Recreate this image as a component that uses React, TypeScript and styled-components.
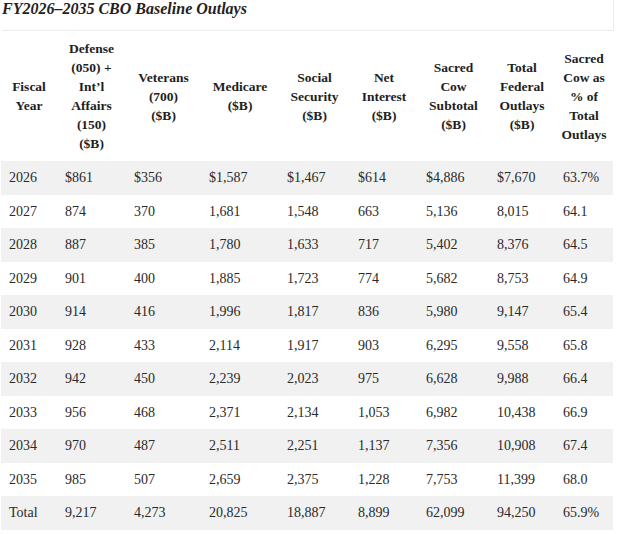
import React from "react";
import styled, { createGlobalStyle } from "styled-components";

const Global = createGlobalStyle`
  html, body { margin: 0; padding: 0; background: #fff; }
  body { font-family: "Liberation Serif", "DejaVu Serif", serif; color: #222; }
`;

const Page = styled.div`
  width: 620px;
  height: 534px;
  overflow: hidden;
`;

const TitleBar = styled.div`
  width: 611px;
  height: 30px;
  margin-left: 2px;
  border-right: 1px solid #ececec;
  border-bottom: 1px solid #ececec;
  box-sizing: content-box;
`;

const Title = styled.h2`
  margin: 0;
  font-size: 16px;
  line-height: 18px;
  font-weight: bold;
  font-style: italic;
  color: #222;
`;

const Table = styled.table`
  border-collapse: collapse;
  table-layout: fixed;
  width: 612px;
  margin-left: 1px;
`;

const Col = styled.col<{ $w: number }>`
  width: ${(p) => p.$w}px;
`;

const Th = styled.th`
  font-size: 13.5px;
  line-height: 19px;
  font-weight: bold;
  text-align: center;
  vertical-align: middle;
  padding: 8px 0;
  white-space: nowrap;
  color: #1e1e1e;
`;

const Row = styled.tr<{ $striped: boolean }>`
  background: ${(p) => (p.$striped ? "#f1f1f1" : "#fff")};
`;

const Td = styled.td`
  font-size: 14px;
  line-height: 19.5px;
  padding: 7px 0 7px 8px;
  white-space: nowrap;
  color: #2a2a2a;
`;

const widths = [56, 69, 75, 78, 71, 68, 71, 66, 58];

const headers: string[][] = [
  ["Fiscal", "Year"],
  ["Defense", "(050) +", "Int’l", "Affairs", "(150)", "($B)"],
  ["Veterans", "(700)", "($B)"],
  ["Medicare", "($B)"],
  ["Social", "Security", "($B)"],
  ["Net", "Interest", "($B)"],
  ["Sacred", "Cow", "Subtotal", "($B)"],
  ["Total", "Federal", "Outlays", "($B)"],
  ["Sacred", "Cow as", "% of", "Total", "Outlays"],
];

const rows: string[][] = [
  ["2026", "$861", "$356", "$1,587", "$1,467", "$614", "$4,886", "$7,670", "63.7%"],
  ["2027", "874", "370", "1,681", "1,548", "663", "5,136", "8,015", "64.1"],
  ["2028", "887", "385", "1,780", "1,633", "717", "5,402", "8,376", "64.5"],
  ["2029", "901", "400", "1,885", "1,723", "774", "5,682", "8,753", "64.9"],
  ["2030", "914", "416", "1,996", "1,817", "836", "5,980", "9,147", "65.4"],
  ["2031", "928", "433", "2,114", "1,917", "903", "6,295", "9,558", "65.8"],
  ["2032", "942", "450", "2,239", "2,023", "975", "6,628", "9,988", "66.4"],
  ["2033", "956", "468", "2,371", "2,134", "1,053", "6,982", "10,438", "66.9"],
  ["2034", "970", "487", "2,511", "2,251", "1,137", "7,356", "10,908", "67.4"],
  ["2035", "985", "507", "2,659", "2,375", "1,228", "7,753", "11,399", "68.0"],
  ["Total", "9,217", "4,273", "20,825", "18,887", "8,899", "62,099", "94,250", "65.9%"],
];

export default function App() {
  return (
    <Page>
      <Global />
      <TitleBar>
        <Title>FY2026–2035 CBO Baseline Outlays</Title>
      </TitleBar>
      <Table>
        <colgroup>
          {widths.map((w, i) => (
            <Col key={i} $w={w} />
          ))}
        </colgroup>
        <thead>
          <tr>
            {headers.map((lines, i) => (
              <Th key={i}>
                {lines.map((l, j) => (
                  <React.Fragment key={j}>
                    {j > 0 && <br />}
                    {l}
                  </React.Fragment>
                ))}
              </Th>
            ))}
          </tr>
        </thead>
        <tbody>
          {rows.map((r, i) => (
            <Row key={i} $striped={i % 2 === 0}>
              {r.map((c, j) => (
                <Td key={j}>{c}</Td>
              ))}
            </Row>
          ))}
        </tbody>
      </Table>
    </Page>
  );
}
